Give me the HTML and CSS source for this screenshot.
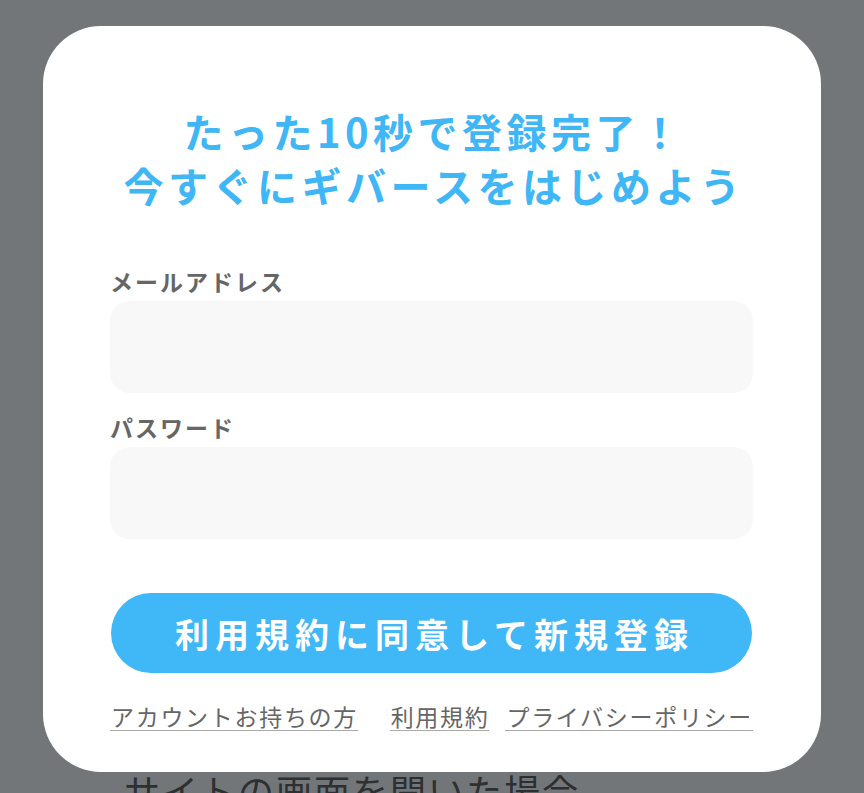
FILE: index.html
```html
<!DOCTYPE html>
<html lang="ja">
<head>
<meta charset="utf-8">
<title>新規登録</title>
<link rel="stylesheet" href="styles.css">
</head>
<body>
<div class="modal">
  <h1 class="title">たった10秒で登録完了！<br>今すぐにギバースをはじめよう</h1>
  <form class="form">
    <label class="label" for="email">メールアドレス</label>
    <input class="input" id="email" type="email">
    <label class="label label-second" for="password">パスワード</label>
    <input class="input" id="password" type="password">
    <button class="submit" type="button">利用規約に同意して新規登録</button>
  </form>
  <div class="links">
    <a class="link" href="#">アカウントお持ちの方</a>
    <div class="links-right">
      <a class="link" href="#">利用規約</a>
      <a class="link" href="#">プライバシーポリシー</a>
    </div>
  </div>
</div>
<p class="behind">サイトの画面を開いた場合</p>
</body>
</html>
```
FILE: styles.css
```css
* { box-sizing: border-box; }
html, body {
  margin: 0;
  padding: 0;
  height: 100%;
  overflow: hidden;
}
body {
  background: #737679;
  font-family: "Noto Sans CJK JP", "Noto Sans", sans-serif;
}
.modal {
  margin: 26px 43px 0;
  background: #ffffff;
  border-radius: 58px;
  padding: 78px 68px 41px 67px;
}
.title {
  margin: 0;
  padding-left: 5px;
  text-align: center;
  color: #3fb6f5;
  font-size: 40px;
  font-weight: 700;
  line-height: 54px;
  letter-spacing: 4.5px;
}
.form {
  display: flex;
  flex-direction: column;
  margin: 53px 0 0;
}
.label {
  color: #666666;
  font-size: 23px;
  font-weight: 700;
  line-height: 32px;
  letter-spacing: 2px;
  margin-bottom: 4px;
}
.label-second {
  margin-top: 18px;
}
.input {
  height: 92px;
  border: none;
  border-radius: 20px;
  background: #f8f8f8;
  outline: none;
  font: inherit;
  padding: 0 20px;
}
.submit {
  margin: 54px 1px 0;
  height: 80px;
  border: none;
  border-radius: 40px;
  background: #40b7f6;
  color: #ffffff;
  font-family: inherit;
  font-size: 34px;
  font-weight: 700;
  letter-spacing: 6px;
  padding: 0 0 0 6px;
}
.links {
  display: flex;
  justify-content: space-between;
  align-items: flex-start;
  margin-top: 29px;
}
.links-right {
  display: flex;
  gap: 16px;
}
.link {
  color: #666666;
  text-decoration: none;
  font-size: 23px;
  line-height: 28px;
  letter-spacing: 1.7px;
  border-bottom: 1.5px solid #aaaaaa;
  padding-left: 1px;
}
.behind {
  margin: 0 0 0 124px;
  color: #2d2f31;
  font-size: 36px;
  line-height: 36px;
  letter-spacing: 2px;
}
```
